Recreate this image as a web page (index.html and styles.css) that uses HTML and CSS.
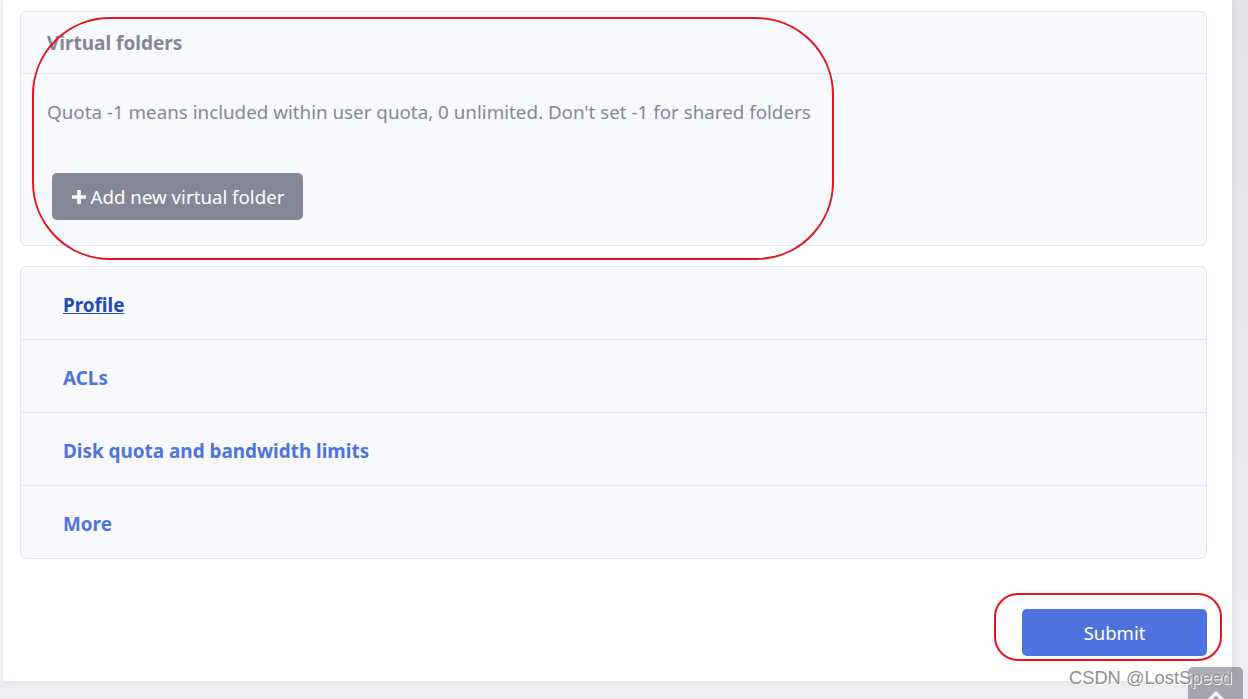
FILE: index.html
```html
<!DOCTYPE html>
<html>
<head>
<meta charset="utf-8">
<link rel="stylesheet" href="styles.css">
</head>
<body>
<div class="page">
  <div class="content">
    <div class="card">
      <div class="card-header">Virtual folders</div>
      <div class="card-body">
        <p class="hint">Quota -1 means included within user quota, 0 unlimited. Don't set -1 for shared folders</p>
        <button class="btn btn-secondary"><svg class="plus" viewBox="0 0 16 16" width="16" height="16"><path d="M6.2 1h3.6v5.2H15v3.6H9.8V15H6.2V9.8H1V6.2h5.2z" fill="#fff"/></svg>Add new virtual folder</button>
      </div>
    </div>
    <div class="card accordion">
      <div class="acc-row"><a class="acc-link active">Profile</a></div>
      <div class="acc-row"><a class="acc-link">ACLs</a></div>
      <div class="acc-row"><a class="acc-link">Disk quota and bandwidth limits</a></div>
      <div class="acc-row"><a class="acc-link">More</a></div>
    </div>
    <div class="actions">
      <button class="btn btn-primary">Submit</button>
    </div>
  </div>
</div>
<div class="mark mark-folders"></div>
<div class="mark mark-submit"></div>
<div class="scroll-top"><svg viewBox="0 0 20 12" width="20" height="12"><path d="M3 11l7-7 7 7" stroke="#fff" stroke-width="3" fill="none"/></svg></div>
<div class="watermark">CSDN @LostSpeed</div>
</body>
</html>
```

FILE: styles.css
```css
html, body {
  margin: 0;
  padding: 0;
}
body {
  width: 1248px;
  height: 699px;
  overflow: hidden;
  background: linear-gradient(#e3e4e9, #eeeff2);
  font-family: "Noto Sans", "Open Sans", sans-serif;
  position: relative;
}
.page {
  display: flex;
  padding-left: 3px;
  background: #eef0f5;
  width: 1229px;
}
.content {
  width: 1229px;
  height: 681px;
  background: #fff;
  box-sizing: border-box;
  padding: 11px 25px 0 17px;
  display: flex;
  flex-direction: column;
  box-shadow: 2px 0 6px rgba(0,0,0,0.06);
}
.card {
  background: #f8f9fc;
  border: 1px solid #e3e6f0;
  border-radius: 6px;
}
.card-header {
  height: 62px;
  box-sizing: border-box;
  border-bottom: 1px solid #e3e6f0;
  padding: 0 26px;
  display: flex;
  align-items: center;
  font-weight: 700;
  font-size: 19px;
  color: #858796;
}
.card-body {
  height: 171px;
  box-sizing: border-box;
  padding: 25px 26px 0 26px;
}
.hint {
  margin: 0;
  font-size: 18.8px;
  line-height: 26px;
  color: #858796;
}
.btn {
  border: none;
  border-radius: 5px;
  font-family: inherit;
  color: #fff;
  cursor: pointer;
}
.btn-secondary {
  margin-top: 48px;
  margin-left: 5px;
  height: 47px;
  width: 251px;
  background: #858796;
  font-size: 18.7px;
  display: flex;
  align-items: center;
  justify-content: center;
  gap: 4px;
  padding: 0;
}
.plus {
  display: block;
}
.accordion {
  margin-top: 20px;
  display: flex;
  flex-direction: column;
}
.acc-row {
  height: 73px;
  box-sizing: border-box;
  display: flex;
  align-items: center;
  padding-left: 42px;
  padding-top: 3px;
  border-bottom: 1px solid #e3e6f0;
}
.acc-row:last-child {
  border-bottom: none;
  height: 72px;
}
.acc-link {
  font-weight: 700;
  font-size: 18.9px;
  color: #4e73df;
}
.acc-link.active {
  color: #224abe;
  text-decoration: underline;
}
.actions {
  display: flex;
  justify-content: flex-end;
  margin-top: 50px;
}
.btn-primary {
  width: 185px;
  height: 47px;
  background: #4e73df;
  font-size: 18.5px;
}
.mark {
  position: absolute;
  border: 2px solid #e3161f;
  box-sizing: border-box;
}
.mark-folders {
  left: 32px;
  top: 17px;
  width: 802px;
  height: 243px;
  border-radius: 78px;
}
.mark-submit {
  left: 994px;
  top: 593px;
  width: 228px;
  height: 68px;
  border-radius: 24px;
}
.scroll-top {
  position: absolute;
  left: 1188px;
  top: 667px;
  width: 55px;
  height: 40px;
  background: rgba(90, 92, 105, 0.5);
  border-radius: 5px;
  display: flex;
  justify-content: center;
  padding-top: 22px;
  box-sizing: border-box;
}
.watermark {
  position: absolute;
  left: 1069px;
  top: 667px;
  font-family: "Liberation Sans", Arial, sans-serif;
  font-size: 18.3px;
  color: #8f8f8f;
  text-shadow: 1px 1px 0 #fff, -1px 0 0 rgba(255,255,255,0.6);
}
```
